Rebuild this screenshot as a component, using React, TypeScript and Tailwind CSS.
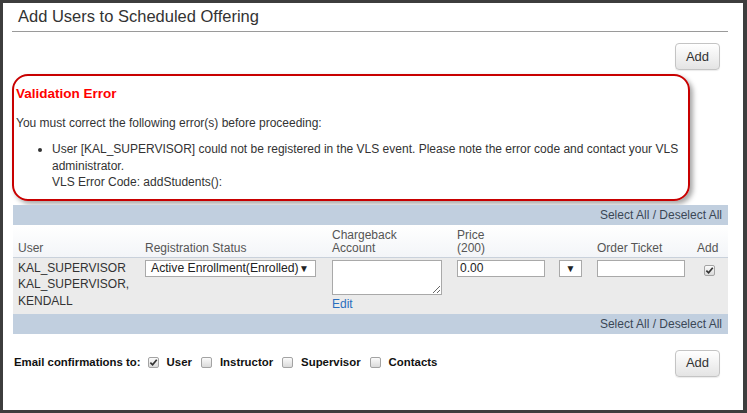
import React from "react";

const FONT = { fontFamily: '"Liberation Sans", Arial, sans-serif' };

function AddButton() {
  return (
    <button
      type="button"
      className="h-[27px] w-[45px] rounded-[4px] border border-[#c4c4c4] bg-gradient-to-b from-[#ffffff] to-[#e4e4e4] text-[13px] text-[#333] shadow-[0_1px_1px_rgba(0,0,0,0.08)]"
    >
      Add
    </button>
  );
}

function Check({ checked = false }: { checked?: boolean }) {
  return (
    <span className="inline-flex h-[11px] w-[11px] items-center justify-center rounded-[2px] border border-[#a3a3a3] bg-gradient-to-b from-[#fbfbfb] to-[#dadada]">
      {checked && (
        <svg viewBox="0 0 10 10" className="h-[9px] w-[9px]">
          <path d="M1.5 5.2 L4 7.6 L8.6 2" fill="none" stroke="#333" strokeWidth="1.9" />
        </svg>
      )}
    </span>
  );
}

function SelectAllBar() {
  return (
    <div className="flex h-[20px] items-center justify-end bg-[#c1cfdf] pr-[6px] text-[12px] text-[#3b4756]">
      Select All / Deselect All
    </div>
  );
}

export default function App() {
  return (
    <div
      className="h-[413px] w-[747px] bg-[#3d3d3d] pb-[3px] pl-[3px] pr-[4px] pt-[3px]"
      style={FONT}
    >
      <div className="h-full bg-white pl-[10px] pr-[15px]">
        <h2 className="-ml-px border-b border-[#9a9a9a] pb-[5px] pl-[6px] pt-[3px] text-[16.5px] leading-[20px] text-[#333]">
          Add Users to Scheduled Offering
        </h2>

        <div className="mt-[11px] flex justify-end pr-[8px]">
          <AddButton />
        </div>

        <div className="-ml-px mt-[4px] w-[678px] rounded-[16px] border-2 border-[#c80000] pb-[8px] pl-[2px] pr-[4px] pt-[9px] shadow-[3px_3px_5px_rgba(0,0,0,0.35)]">
          <div className="text-[13.5px] font-bold leading-[18px] text-[#ff0000]">Validation Error</div>
          <p className="mt-[12px] text-[12px] leading-[16px] text-[#333]">
            You must correct the following error(s) before proceeding:
          </p>
          <ul className="mt-[10px] list-disc pl-[36px] text-[12px] leading-[16.5px] text-[#333]">
            <li>
              User [KAL_SUPERVISOR] could not be registered in the VLS event. Please note the error code and
              contact your VLS administrator.
              <br />
              VLS Error Code: addStudents():
            </li>
          </ul>
        </div>

        <div className="mt-[4px] text-[12px] text-[#333]">
          <SelectAllBar />

          <div className="grid h-[33px] grid-cols-[127px_187px_125px_102px_38px_100px_36px] items-end border-b border-[#c9d1db] bg-gradient-to-b from-[#ffffff] to-[#f3f5f8] pb-[2px] leading-[13px] text-[#555]">
            <div className="pl-[5px]">User</div>
            <div className="pl-[5px]">Registration Status</div>
            <div className="pl-[5px]">
              Chargeback
              <br />
              Account
            </div>
            <div className="pl-[5px]">
              Price
              <br />
              (200)
            </div>
            <div />
            <div className="pl-[5px]">Order Ticket</div>
            <div className="pl-[5px]">Add</div>
          </div>

          <div className="grid h-[56px] grid-cols-[127px_187px_125px_102px_38px_100px_36px] items-start bg-[#ebebeb] pt-[2px]">
            <div className="pl-[5px] pr-[2px] leading-[16.5px]">
              KAL_SUPERVISOR
              <br />
              KAL_SUPERVISOR, KENDALL
            </div>
            <div className="pl-[5px]">
              <div className="flex h-[17px] w-[171px] items-center justify-between border border-[#a9a9a9] bg-white pl-[5px] pr-[6px] text-[12.2px] text-[#222]">
                <span>Active Enrollment(Enrolled)</span>
                <span className="text-[10px]">▼</span>
              </div>
            </div>
            <div className="flex flex-col pl-[5px]">
              <textarea
                readOnly
                className="h-[35px] w-[110px] border border-[#a9a9a9] bg-white outline-none"
              />
              <a className="mt-[1px] leading-[16px] text-[#2a6ebd]">Edit</a>
            </div>
            <div className="pl-[5px]">
              <div className="flex h-[17px] w-[88px] items-center border border-[#a9a9a9] bg-white pl-[2px] text-[12px] text-[#222]">
                0.00
              </div>
            </div>
            <div className="pl-[5px]">
              <div className="flex h-[17px] w-[23px] items-center justify-center border border-[#a9a9a9] bg-white text-[10px] text-[#222]">
                ▼
              </div>
            </div>
            <div className="pl-[5px]">
              <div className="h-[17px] w-[88px] border border-[#a9a9a9] bg-white" />
            </div>
            <div className="pl-[12px] pt-[2px]">
              <Check checked />
            </div>
          </div>

          <SelectAllBar />
        </div>

        <div className="mt-[16px] flex items-center justify-between pl-px pr-[8px]">
          <div className="flex items-center text-[11.4px] font-bold text-[#111]">
            <span>Email confirmations to:</span>
            <span className="ml-[7px] flex items-center">
              <Check checked />
            </span>
            <span className="ml-[8px]">User</span>
            <span className="ml-[9px] flex items-center">
              <Check />
            </span>
            <span className="ml-[8px]">Instructor</span>
            <span className="ml-[9px] flex items-center">
              <Check />
            </span>
            <span className="ml-[8px]">Supervisor</span>
            <span className="ml-[9px] flex items-center">
              <Check />
            </span>
            <span className="ml-[8px]">Contacts</span>
          </div>
          <AddButton />
        </div>
      </div>
    </div>
  );
}
